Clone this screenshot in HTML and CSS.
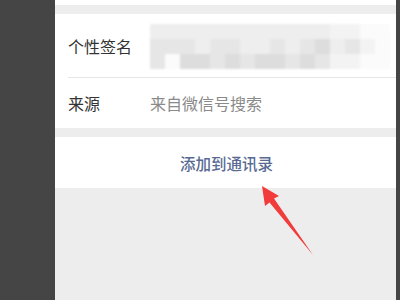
FILE: index.html
```html
<!DOCTYPE html>
<html lang="zh">
<head>
<meta charset="utf-8">
<link rel="stylesheet" href="styles.css">
</head>
<body>
<div class="side-left"></div>
<main class="main">
  <div class="top-strip"></div>
  <section class="card">
    <div class="row row-sign">
      <span class="label">个性签名</span>
      <div class="blur">
        <i class="e"></i><i class="e"></i><i class="e"></i><i class="e"></i><i class="e"></i><i class="e"></i><i class="e"></i><i class="e"></i><i class="e"></i><i class="e"></i><i class="e"></i><i class="e"></i><i class="f"></i><i class="f"></i><i class="w"></i><i class="w"></i>
        <i class="d"></i><i class="d"></i><i class="d"></i><i class="e"></i><i class="d"></i><i class="d"></i><i class="e"></i><i class="e"></i><i class="d"></i><i class="e"></i><i class="d"></i><i class="c"></i><i class="e"></i><i class="d"></i><i class="f"></i><i class="w"></i>
        <i class="d"></i><i class="w"></i><i class="c"></i><i class="c"></i><i class="d"></i><i class="c"></i><i class="d"></i><i class="c"></i><i class="c"></i><i class="d"></i><i class="c"></i><i class="d"></i><i class="f"></i><i class="f"></i><i class="w"></i><i class="w"></i>
      </div>
    </div>
    <div class="row row-source">
      <span class="label">来源</span>
      <span class="value">来自微信号搜索</span>
    </div>
  </section>
  <section class="action">
    <span class="action-text">添加到通讯录</span>
  </section>
  <div class="rest"></div>
  <svg class="arrow" width="70" height="80" viewBox="255 180 70 80" xmlns="http://www.w3.org/2000/svg">
    <polygon points="262,186 279,196 274,198.5 313,255 269.5,202.5 265,206" fill="#f23b3b"/>
  </svg>
</main>
<div class="side-right"></div>
</body>
</html>
```
FILE: styles.css
```css
html, body {
  margin: 0;
  padding: 0;
  width: 400px;
  height: 300px;
  overflow: hidden;
}
body {
  display: flex;
  font-family: "Noto Sans CJK SC", "Noto Sans", sans-serif;
  background: #ededed;
}
.side-left {
  width: 55px;
  flex: none;
  background: #454545;
}
.side-right {
  width: 4px;
  flex: none;
  background: #454545;
}
.main {
  flex: 1;
  display: flex;
  flex-direction: column;
  background: #ededed;
  position: relative;
}
.top-strip {
  height: 5px;
  background: #fff;
}
.card {
  margin-top: 9px;
  background: #fff;
  padding-left: 13px;
}
.row {
  display: flex;
  align-items: center;
}
.row-sign {
  height: 63px;
  border-bottom: 1px solid #e6e6e6;
}
.row-source {
  height: 50px;
}
.label {
  width: 82px;
  flex: none;
  font-size: 16px;
  color: #333;
}
.value {
  font-size: 16px;
  color: #8a8a8a;
}
.blur {
  display: grid;
  grid-template-columns: repeat(16, 15px);
  grid-template-rows: repeat(3, 15px);
  margin-top: 2px;
  filter: blur(0.8px);
}
.blur i {
  display: block;
}
.blur .w { background: #fbfbfb; }
.blur .f { background: #f3f3f3; }
.blur .e { background: #eeeeee; }
.blur .d { background: #e6e6e6; }
.blur .c { background: #dddddd; }
.action {
  margin-top: 9px;
  height: 51px;
  background: #fff;
  display: flex;
  align-items: center;
  justify-content: center;
}
.action-text {
  font-size: 15.5px;
  font-weight: 500;
  color: #586a93;
  margin-left: 2px;
}
.rest {
  flex: 1;
}
.arrow {
  position: absolute;
  left: 200px;
  top: 180px;
}
```
